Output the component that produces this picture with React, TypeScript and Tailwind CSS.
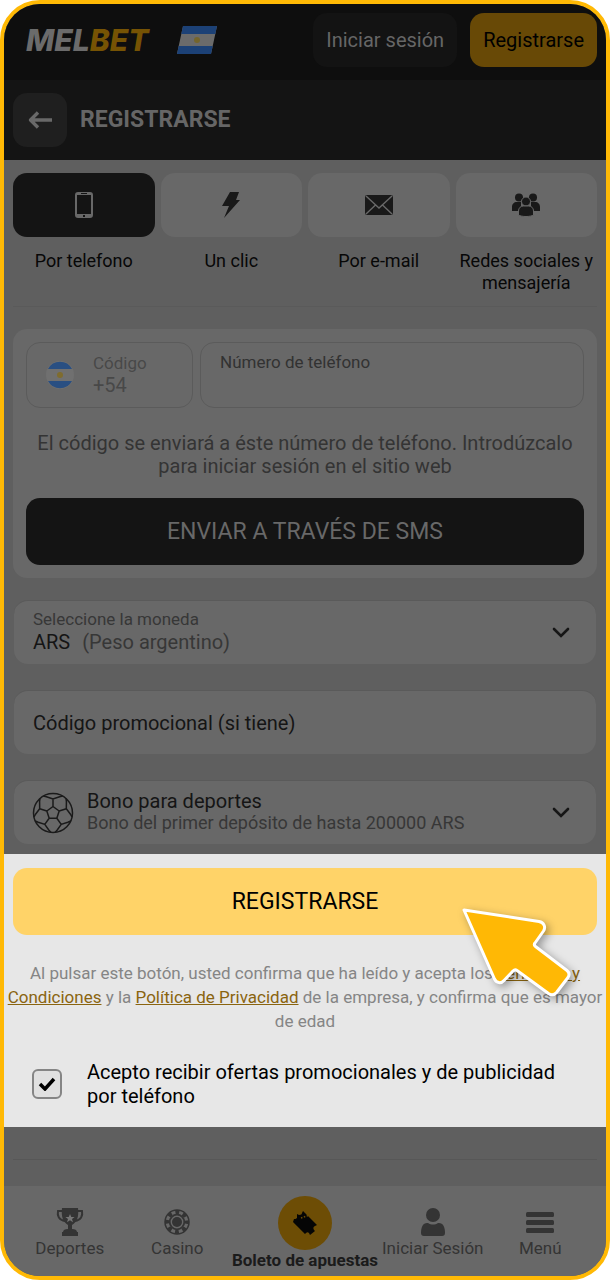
import { useState, type ReactNode } from "react";

const TABS = [
  { id: "phone", label: "Por telefono", icon: <PhoneIcon /> },
  { id: "click", label: "Un clic", icon: <BoltIcon /> },
  { id: "email", label: "Por e-mail", icon: <MailIcon /> },
  { id: "social", label: "Redes sociales y mensajería", icon: <GroupIcon /> },
];

function PhoneIcon() {
  return (
    <svg width="18" height="26" viewBox="0 0 18 26" aria-hidden="true">
      <path
        fillRule="evenodd"
        fill="currentColor"
        d="M3 0h12a3 3 0 0 1 3 3v20a3 3 0 0 1-3 3H3a3 3 0 0 1-3-3V3a3 3 0 0 1 3-3ZM2 3v19h14V3ZM8 23v2h2v-2ZM6 1v1h6V1Z"
      />
    </svg>
  );
}

function BoltIcon() {
  return (
    <svg width="18" height="26" viewBox="0 0 18 26" fill="currentColor" aria-hidden="true">
      <path d="M8 0h9l-3 8h4L2 26l5-12H0Z" />
    </svg>
  );
}

function MailIcon() {
  return (
    <svg width="28" height="20" viewBox="0 0 28 20" aria-hidden="true">
      <rect width="28" height="20" rx="2" fill="currentColor" />
      <path d="m1 1 13 12L27 1M1 19l9.500-9M27 19l-9.500-9" fill="none" stroke="#686868" strokeWidth="1.400" />
    </svg>
  );
}

function GroupIcon() {
  return (
    <svg width="28" height="24" viewBox="0 0 28 24" fill="currentColor" aria-hidden="true">
      <circle cx="7" cy="4.500" r="4" />
      <circle cx="21" cy="4.500" r="4" />
      <path d="M0 18v-4c0-3 2-5 5-5h4v9ZM28 18v-4c0-3-2-5-5-5h-4v9Z" />
      <g stroke="#686868" strokeWidth="1">
        <circle cx="14" cy="8.500" r="4.500" />
        <path d="M6.500 22v-4c0-3 2-5 5-5h5c3 0 5 2 5 5v4c-3 2-12 2-15 0Z" />
      </g>
    </svg>
  );
}

// point on the ball, angle in degrees from the top
function onBall(radius: number, angle: number) {
  const a = ((angle - 90) * Math.PI) / 180;
  return `${(21 + radius * Math.cos(a)).toFixed(2)} ${(21 + radius * Math.sin(a)).toFixed(2)}`;
}

function BallIcon() {
  const seams = [0, 72, 144, 216, 288].map(
    (a) =>
      `M${onBall(6.5, a)}L${onBall(6.5, a + 72)}M${onBall(6.5, a)}L${onBall(14, a)}` +
      `M${onBall(19.5, a - 30)}L${onBall(17.5, a - 22)}L${onBall(14, a)}L${onBall(17.5, a + 22)}L${onBall(19.5, a + 30)}`
  );

  return (
    <svg width="42" height="42" viewBox="0 0 42 42" fill="none" stroke="#1a1a1a" strokeWidth="1.500" aria-hidden="true">
      <circle cx="21" cy="21" r="19.500" />
      <path d={seams.join("")} />
    </svg>
  );
}

function TrophyIcon() {
  return (
    <svg width="28" height="28" viewBox="0 0 28 28" aria-hidden="true">
      <path d="M7 3H2c-1 5 1 9 7 10M21 3h5c1 5-1 9-7 10" fill="none" stroke="currentColor" strokeWidth="2" />
      <path d="M6 0h16c1 9-1 14-6 17v4c3 0 5 1 5 3h1v4H6v-4h1c0-2 2-3 5-3v-4C7 14 5 9 6 0Z" fill="currentColor" />
      <path d="m14 6 1.300 3h3.300l-2.600 2 1 3.300-3-2-3 2 1-3.300-2.600-2h3.300Z" fill="#757575" />
    </svg>
  );
}

function ChipIcon() {
  return (
    <svg width="26" height="26" viewBox="0 0 26 26" fill="none" aria-hidden="true">
      <circle cx="13" cy="13" r="12" stroke="currentColor" strokeWidth="1.500" />
      <circle cx="13" cy="13" r="10" stroke="currentColor" strokeWidth="4" strokeDasharray="3.927 3.927" strokeDashoffset="1.963" />
      <circle cx="13" cy="13" r="7.300" stroke="currentColor" strokeWidth="1.800" />
      <circle cx="13" cy="13" r="5" fill="currentColor" />
    </svg>
  );
}

function TicketIcon() {
  return (
    <svg width="26" height="26" viewBox="0 0 26 26" aria-hidden="true">
      <path
        d="m11 1 3 3c1 1 1 2 2 2l9 9-2 1c-2 1-2 2-1 4l1 1-5 4-1-2c-1-1-2-1-3 0l-1 1L1 12l1-3c1 0 2 0 3-1V4l2 1c2 0 3-1 3-2Z"
        fill="#050505"
      />
      <path d="m9 8 9-3" stroke="#6d4d05" strokeWidth="1.500" strokeDasharray="1.500 1.500" />
    </svg>
  );
}

function UserIcon() {
  return (
    <svg width="24" height="28" viewBox="0 0 24 28" fill="currentColor" aria-hidden="true">
      <circle cx="12" cy="7" r="7" />
      <path d="M0 25c0-6 2-10 6-10h1c3 2 7 2 10 0h1c4 0 6 4 6 10 0 2-1 3-3 3H3c-2 0-3-1-3-3Z" />
    </svg>
  );
}

function MenuIcon() {
  return (
    <svg width="28" height="21" viewBox="0 0 28 21" fill="currentColor" aria-hidden="true">
      <rect width="28" height="5" rx="1.500" />
      <rect y="8" width="28" height="5" rx="1.500" />
      <rect y="16" width="28" height="5" rx="1.500" />
    </svg>
  );
}

function ChevronIcon() {
  return (
    <svg width="18" height="12" viewBox="0 0 18 12" fill="none" aria-hidden="true">
      <path d="m2 2 7 7 7-7" stroke="#161616" strokeWidth="2.600" strokeLinecap="round" />
    </svg>
  );
}

function PointerArrow() {
  return (
    <svg
      className="pointer-events-none absolute top-[47px] right-7 drop-shadow-[3px_3px_4px_rgba(0,0,0,0.35)]"
      width="120"
      height="100"
      viewBox="457 900 120 100"
      aria-hidden="true"
    >
      <path
        d="M463 909 538 920.500C543 921.500 545 926 542.500 930L534 942Q532.500 944 534.500 945.500L566 969.500Q569.500 972.500 567 976.500L555.500 991.500Q552 995.500 547.500 992.500L516 969.500Q514 968 512 970L503 979.500C500 983 495.500 982 493.500 978Z"
        fill="#ffb805"
        stroke="#fff"
        strokeWidth="3"
        strokeLinejoin="round"
      />
    </svg>
  );
}

function NavItem({ icon, label }: { icon: ReactNode; label: string }) {
  return (
    <a href="#" className="flex flex-col items-center pt-5 text-[#343434]">
      <span className="flex h-8 items-center">{icon}</span>
      <span className="text-[17px] leading-5 whitespace-nowrap">{label}</span>
    </a>
  );
}

export default function App() {
  const [tab, setTab] = useState("phone");
  const [accepted, setAccepted] = useState(true);

  return (
    <div className="overflow-hidden rounded-[40px] border-4 border-[#ffb905] bg-[#5f5f5f] font-['Roboto',sans-serif]">
      <header className="flex items-center bg-[#0e0e0e] pt-[9px] pr-[9px] pb-[13px] pl-[22px]">
        <a href="#" className="font-['Inter',sans-serif] text-[30px] leading-8 font-extrabold text-[#6b6b6b] italic">
          MEL<span className="text-[#765304]">BET</span>
        </a>
        <svg className="ml-7" width="40" height="28" viewBox="0 0 40 28" role="img" aria-label="Argentina">
          <path d="M6 0h34l-6 28H0Z" fill="#6b6b6b" />
          <path d="M6 0h34l-1.700 8H4.300ZM1.700 20h34L34 28H0Z" fill="#1c4176" />
          <circle cx="20" cy="14" r="3" fill="#75652c" />
        </svg>
        <div className="ml-auto flex gap-[13px]">
          <button className="h-[54px] rounded-[14px] bg-[#131313] px-[13px] text-[20px] text-[#666]">Iniciar sesión</button>
          <button className="h-[54px] rounded-[14px] bg-[#684906] px-[13px] text-[20px] text-black">Registrarse</button>
        </div>
      </header>

      <div className="flex h-20 items-center gap-[13px] bg-[#141414] px-[9px]">
        <button aria-label="Volver" className="flex size-[54px] items-center justify-center rounded-[14px] bg-[#1f1f1f] text-[#696969]">
          <svg width="24" height="18" viewBox="0 0 24 18" fill="none" stroke="currentColor" strokeWidth="3.400" aria-hidden="true">
            <path d="M24 9H3M10 1.500 2.500 9l7.500 7.500" strokeLinejoin="round" />
          </svg>
        </button>
        <h1 className="text-[23px] font-bold text-[#666]">REGISTRARSE</h1>
      </div>

      <main>
        <form onSubmit={(e) => e.preventDefault()}>
          <div className="px-[9px] pt-[13px]">
            <div className="grid grid-cols-4 gap-[6px] border-b border-[#5a5a5a] pb-3">
              {TABS.map((t) => (
                <button
                  key={t.id}
                  type="button"
                  aria-pressed={tab === t.id}
                  onClick={() => setTab(t.id)}
                  className="flex flex-col gap-[13px] text-[18px] leading-[22px] text-[#070707]"
                >
                  <span
                    className={`flex h-16 w-full items-center justify-center rounded-[14px] ${
                      tab === t.id ? "bg-[#141414] text-[#686868]" : "bg-[#686868] text-[#191919]"
                    }`}
                  >
                    {t.icon}
                  </span>
                  <span className="w-full">{t.label}</span>
                </button>
              ))}
            </div>

            <section className="mt-[22px] rounded-[14px] bg-[#686868] p-[13px]">
              <div className="flex gap-[7px]">
                <label className="flex h-[66px] w-[167px] items-center rounded-[14px] border border-[#5b5b5b] pl-[18px] text-[#484848]">
                  <svg className="shrink-0" width="30" height="30" viewBox="0 0 30 30" aria-hidden="true">
                    <circle cx="15" cy="15" r="14" fill="#707070" />
                    <path d="M3 9a13.500 13.500 0 0 1 24 0ZM3 21a13.500 13.500 0 0 0 24 0Z" fill="#294f82" />
                    <circle cx="15" cy="15" r="3" fill="#7f6c2e" />
                  </svg>
                  <span className="ml-[18px] flex min-w-0 flex-col pb-[3px]">
                    <span className="text-[17px] leading-[22px]">Código</span>
                    <input readOnly value="+54" className="w-full text-[20px] leading-[22px] outline-none" />
                  </span>
                </label>
                <label className="flex h-[66px] min-w-0 flex-1 flex-col rounded-[14px] border border-[#5b5b5b] px-[19px] pt-2 text-[#323232]">
                  <span className="text-[17px] leading-[22px]">Número de teléfono</span>
                  <input type="tel" className="w-full text-[20px] leading-[22px] outline-none" />
                </label>
              </div>
              <p className="mt-6 text-center text-[20px] leading-[23px] text-[#343434]">
                El código se enviará a éste número de teléfono. Introdúzcalo para iniciar sesión en el sitio web
              </p>
              <button type="button" className="mt-5 h-[67px] w-full rounded-[14px] bg-[#141414] pt-0.5 text-[23px] text-[#686868]">
                ENVIAR A TRAVÉS DE SMS
              </button>
            </section>

            <div className="mt-[22px] flex flex-col gap-[26px] px-px pb-[10px]">
              <label className="relative flex h-16 items-center justify-between rounded-[14px] border-t border-[#5a5a5a] bg-[#686868] pr-[26px] pl-[19px]">
                <span className="flex flex-col pb-1">
                  <span className="text-[17px] leading-[23px] text-[#373737]">Seleccione la moneda</span>
                  <span className="flex gap-3 text-[20px] leading-[23px] text-[#373737]">
                    <span className="text-[#151515]">ARS</span>
                    <span>(Peso argentino)</span>
                  </span>
                </span>
                <ChevronIcon />
                <select className="absolute inset-0 w-full opacity-0">
                  <option>ARS (Peso argentino)</option>
                </select>
              </label>
              <input
                aria-label="Código promocional (si tiene)"
                placeholder="Código promocional (si tiene)"
                className="h-16 w-full rounded-[14px] border-t border-[#5a5a5a] bg-[#686868] px-[19px] text-[20px] text-[#151515] outline-none placeholder:text-[#151515]"
              />
              <label className="relative flex h-16 items-center rounded-[14px] border-t border-[#5a5a5a] bg-[#686868] pr-[26px] pl-[18px]">
                <BallIcon />
                <span className="ml-[13px] flex flex-1 flex-col pb-px">
                  <span className="text-[20px] leading-[22px] text-[#151515]">Bono para deportes</span>
                  <span className="text-[18px] leading-[22px] text-[#373737]">Bono del primer depósito de hasta 200000 ARS</span>
                </span>
                <ChevronIcon />
                <select className="absolute inset-0 w-full opacity-0">
                  <option>Bono para deportes</option>
                </select>
              </label>
            </div>
          </div>

          <section className="relative bg-[#e7e7e7] px-[9px] pt-[14px] pb-[19px]">
            <button type="submit" className="h-[67px] w-full rounded-[14px] bg-[#ffd368] pt-0.5 text-[23px] text-black">
              REGISTRARSE
            </button>
            <p className="-mx-2 mt-[26px] text-center text-[17px] leading-6 text-[#858585]">
              Al pulsar este botón, usted confirma que ha leído y acepta los{" "}
              <a href="#" className="text-[#8a640f] underline">
                Términos y Condiciones
              </a>{" "}
              y la{" "}
              <a href="#" className="text-[#8a640f] underline">
                Política de Privacidad
              </a>{" "}
              de la empresa, y confirma que es mayor de edad
            </p>
            <label className="mt-[27px] flex items-center gap-[25px] pr-8 pl-[19px] text-[20px] leading-6 text-black">
              <span className="relative flex size-[30px] shrink-0 items-center justify-center">
                <input
                  type="checkbox"
                  checked={accepted}
                  onChange={(e) => setAccepted(e.target.checked)}
                  className="absolute inset-0 appearance-none rounded-md border-2 border-[#858585] bg-[#e0e0e0]"
                />
                {accepted && (
                  <svg className="relative" width="18" height="14" viewBox="0 0 18 14" fill="none" aria-hidden="true">
                    <path d="m2 7 5 5 9-10" stroke="#000" strokeWidth="3.500" />
                  </svg>
                )}
              </span>
              Acepto recibir ofertas promocionales y de publicidad por teléfono
            </label>
            <PointerArrow />
          </section>
        </form>
        <div className="mx-[9px] mb-[26px] h-[33px] border-b border-[#575757]" />
      </main>

      <nav className="grid h-[90px] grid-cols-[1fr_1fr_148px_1fr_1fr] bg-[#686868] px-3">
        <NavItem icon={<TrophyIcon />} label="Deportes" />
        <NavItem icon={<ChipIcon />} label="Casino" />
        <a href="#" className="flex flex-col items-center pt-[10px] text-[#1b1b1b]">
          <span className="flex size-[54px] items-center justify-center rounded-full bg-[#6d4d05]">
            <TicketIcon />
          </span>
          <span className="text-[17px] leading-5 font-bold whitespace-nowrap">Boleto de apuestas</span>
        </a>
        <NavItem icon={<UserIcon />} label="Iniciar Sesión" />
        <NavItem icon={<MenuIcon />} label="Menú" />
      </nav>
    </div>
  );
}
